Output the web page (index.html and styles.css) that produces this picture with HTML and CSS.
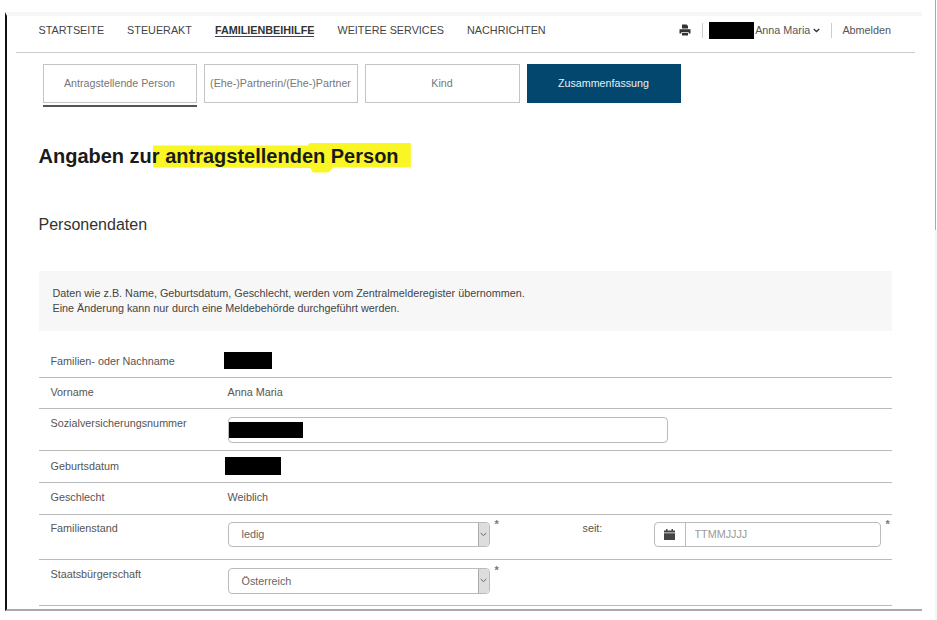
FILE: index.html
```html
<!DOCTYPE html>
<html lang="de">
<head>
<meta charset="UTF-8">
<meta name="viewport" content="width=device-width, initial-scale=1.0">
<title>Familienbeihilfe</title>
<link rel="stylesheet" href="styles.css">
</head>
<body>

<div class="frame">
    <header class="topbar">
        <nav class="mainnav">
            <a href="#">Startseite</a>
            <a href="#">Steuerakt</a>
            <a href="#" class="current">Familienbeihilfe</a>
            <a href="#">Weitere Services</a>
            <a href="#">Nachrichten</a>
        </nav>
        <div class="usernav">
            <svg class="printer" viewBox="0 0 12 12" width="12" height="12">
                <path fill="#333" d="M3 0.5h4.6L9 2v2.6H3zM0.5 5.2h11v4.3H9.6V8H2.4v1.5H0.5zM3 8.8h6v2.7H3z"/>
            </svg>
            <span class="sep"></span>
            <span class="redact name-redact"></span>
            <span class="username">Anna Maria</span>
            <svg class="chevron" viewBox="0 0 7 5" width="7" height="5">
                <path fill="none" stroke="#333" stroke-width="1.3" d="M0.7 1l2.8 2.6L6.3 1"/>
            </svg>
            <span class="sep sep-wide"></span>
            <a href="#" class="logout">Abmelden</a>
        </div>
    </header>

    <div class="tabs">
        <a href="#" class="tab active">Antragstellende Person</a>
        <a href="#" class="tab">(Ehe-)Partnerin/(Ehe-)Partner</a>
        <a href="#" class="tab">Kind</a>
        <a href="#" class="tab done">Zusammenfassung</a>
    </div>

    <main class="content">
        <h1>Angaben zu<span class="marked">r antragstellenden Person</span></h1>
        <h2>Personendaten</h2>

        <div class="infobox">
            Daten wie z.B. Name, Geburtsdatum, Geschlecht, werden vom Zentralmelderegister übernommen.<br>
            Eine Änderung kann nur durch eine Meldebehörde durchgeführt werden.
        </div>

        <div class="row row-name">
            <span class="label">Familien- oder Nachname</span>
            <span class="redact surname-redact"></span>
        </div>
        <div class="row row-plain">
            <span class="label">Vorname</span>
            <span class="value">Anna Maria</span>
        </div>
        <div class="row row-svnr">
            <span class="label">Sozialversicherungsnummer</span>
            <div class="field svnr"><span class="redact svnr-redact"></span></div>
        </div>
        <div class="row row-plain row-birth">
            <span class="label">Geburtsdatum</span>
            <span class="redact birth-redact"></span>
        </div>
        <div class="row row-plain row-gender">
            <span class="label">Geschlecht</span>
            <span class="value">Weiblich</span>
        </div>
        <div class="row row-form">
            <span class="label">Familienstand</span>
            <div class="field select">
                <span class="select-text">ledig</span>
                <span class="select-arrow">
                    <svg viewBox="0 0 7 5" width="7" height="5"><path fill="none" stroke="#666" stroke-width="1" d="M0.7 1l2.8 2.6L6.3 1"/></svg>
                </span>
            </div>
            <span class="required">*</span>
            <span class="since">seit:</span>
            <div class="field date">
                <span class="date-addon">
                    <svg viewBox="0 0 11 11" width="11" height="11">
                        <path fill="#444" d="M0 1.5h2V0h1.5v1.5h4V0H9v1.5h2v2H0zM0 4.3h11V11H0z"/>
                    </svg>
                </span>
                <input type="text" class="date-input" placeholder="TTMMJJJJ">
            </div>
            <span class="required">*</span>
        </div>
        <div class="row row-form row-last">
            <span class="label">Staatsbürgerschaft</span>
            <div class="field select">
                <span class="select-text">Österreich</span>
                <span class="select-arrow">
                    <svg viewBox="0 0 7 5" width="7" height="5"><path fill="none" stroke="#666" stroke-width="1" d="M0.7 1l2.8 2.6L6.3 1"/></svg>
                </span>
            </div>
            <span class="required">*</span>
        </div>
    </main>
</div>

<aside class="edge">
    <div class="edge-top"></div>
    <div class="edge-bottom"></div>
</aside>

</body>
</html>
```

FILE: styles.css
```css
html, body {
    height: 620px;
    overflow: hidden;
}

body {
    font-family: "Liberation Sans", Arial, sans-serif;
    background-color: #fff;
    color: #444;
    margin: 0;
    padding: 0;
    display: flex;
    font-size: 10.8px;
}

a {
    color: inherit;
    text-decoration: none;
}

.frame {
    box-sizing: border-box;
    width: 917px;
    height: 599px;
    margin: 12px 0 0 5px;
    border-left: 2.5px solid #111;
    border-top: 4px solid #f6f6f6;
    border-bottom: 2px solid #aaa;
    padding-left: 0.5px;
}

.edge {
    width: 2px;
    margin-left: 13px;
    display: flex;
    flex-direction: column;
}

.edge-top {
    height: 230px;
    border-left: 1px solid #aaa;
}

.edge-bottom {
    flex: 1;
    background-color: #f5f5f5;
}

/* top navigation */
.topbar {
    box-sizing: border-box;
    height: 36.5px;
    margin: 0 7px 0 8px;
    padding: 0 24px 7px 23px;
    border-bottom: 1.5px solid #ccc;
    display: flex;
    align-items: center;
    justify-content: space-between;
}

.mainnav {
    display: flex;
    gap: 23px;
    font-size: 10.8px;
    text-transform: uppercase;
    color: #444;
}

.mainnav .current {
    font-weight: bold;
    color: #333;
    border-bottom: 1px solid #445;
    margin-bottom: -1px;
}

.usernav {
    display: flex;
    align-items: center;
    font-size: 10.8px;
    color: #555;
}

.printer {
    margin-right: 11px;
}

.sep {
    width: 1px;
    height: 15px;
    background-color: #ccc;
}

.sep-wide {
    margin: 0 10px 0 11px;
}

.redact {
    display: block;
    background-color: #000;
}

.name-redact {
    width: 45px;
    height: 17px;
    margin: 0 1px 0 6px;
}

.chevron {
    margin-left: 3px;
}

/* steps */
.tabs {
    display: flex;
    gap: 7px;
    margin: 11px 0 0 35px;
}

.tab {
    box-sizing: border-box;
    width: 154px;
    height: 39px;
    border: 1.5px solid #c4c4c4;
    color: #777;
    font-size: 10.7px;
    display: flex;
    align-items: center;
    justify-content: center;
    white-space: nowrap;
}

.tab:nth-child(3) {
    width: 155px;
}

.tab.active {
    box-shadow: 0 2px 0 #fff, 0 4px 0 #555;
}

.tab.done {
    background-color: #03466e;
    border-color: #03466e;
    color: #e6f0f5;
}

/* form area */
.content {
    padding: 0 30px 0 31px;
}

h1 {
    position: relative;
    z-index: 0;
    margin: 41px 0 0;
    font-size: 20px;
    line-height: 24px;
    color: #1a1a1a;
}

.marked {
    position: relative;
}

/* hand drawn marker stroke behind the text */
.marked::before {
    content: "";
    position: absolute;
    z-index: -1;
    left: 1px;
    top: -2px;
    width: 258px;
    height: 30px;
    background-color: #faf626;
    clip-path: polygon(0 10%, 60% 10%, 61% 0, 100% 0, 100% 83%, 70% 83%, 68% 100%, 62% 100%, 61% 85%, 0 83%);
}

h2 {
    margin: 47px 0 0;
    font-size: 16px;
    line-height: 20px;
    font-weight: normal;
    color: #333;
}

.infobox {
    box-sizing: border-box;
    height: 60px;
    margin-top: 36px;
    padding: 15px 14px 0;
    background-color: #f7f7f7;
    line-height: 15px;
    color: #444;
}

.row {
    box-sizing: border-box;
    display: flex;
    align-items: center;
    padding-left: 12px;
    border-bottom: 1.5px solid #bbb;
    color: #555;
}

.label {
    width: 177px;
    flex-shrink: 0;
}

.row-name {
    height: 32px;
    margin-top: 15px;
}

.row-plain {
    height: 31px;
    padding-bottom: 2px;
}

.row-birth {
    height: 32px;
    padding-bottom: 0;
}

.row-gender {
    height: 32px;
    padding-bottom: 2px;
}

.row-svnr {
    height: 42px;
    align-items: flex-start;
    padding-top: 8px;
}

.row-form {
    height: 45px;
    align-items: flex-start;
    padding-top: 7px;
}

.row-last {
    height: 46px;
    padding-top: 8px;
}

.surname-redact {
    width: 48px;
    height: 17px;
    margin: -2px 0 0 -4px;
}

.birth-redact {
    width: 56px;
    height: 18px;
    margin-left: -3px;
}

.field {
    box-sizing: border-box;
    height: 26px;
    flex-shrink: 0;
    border: 1px solid #bbb;
    border-radius: 4px;
    background-color: #fff;
    display: flex;
    align-items: center;
}

.svnr {
    width: 440px;
}

.svnr-redact {
    width: 74px;
    height: 16px;
}

.select {
    width: 262px;
    height: 25px;
    justify-content: space-between;
    overflow: hidden;
}

.row-last .select {
    height: 26px;
}

.select-text {
    padding-left: 13px;
    color: #666;
}

.select-arrow {
    box-sizing: border-box;
    width: 11px;
    height: 100%;
    border-left: 1px solid #aaa;
    background-color: #ddd;
    display: flex;
    align-items: center;
    justify-content: center;
}

.required {
    width: 9px;
    flex-shrink: 0;
    margin: -2px 0 0 5px;
    font-size: 11px;
    font-weight: bold;
    line-height: 9px;
    color: #777;
}

.since {
    width: 71px;
    flex-shrink: 0;
    margin-left: 79px;
    color: #555;
}

.date {
    width: 227px;
    height: 25px;
}

.date-addon {
    box-sizing: border-box;
    width: 31px;
    height: 100%;
    flex-shrink: 0;
    border-right: 1px solid #bbb;
    display: flex;
    align-items: center;
    justify-content: center;
}

.date-input {
    flex: 1;
    min-width: 0;
    border: none;
    outline: none;
    background: transparent;
    padding: 0 9px;
    font-family: inherit;
    font-size: 10.8px;
}

.date-input::placeholder {
    color: #999;
}
```
